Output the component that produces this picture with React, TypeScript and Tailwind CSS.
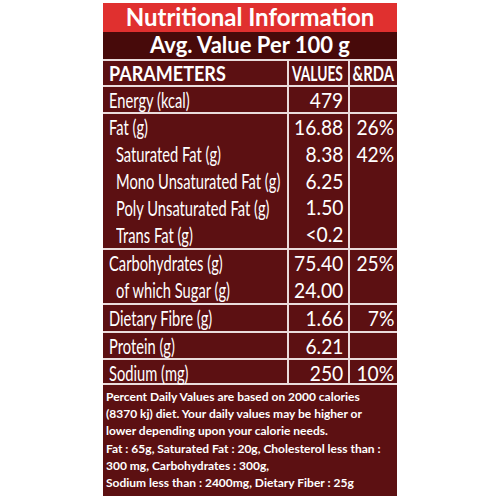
const GROUPS = [
  { h: "h-[27px]", lines: [["Energy (kcal)", false]], values: ["479"], rda: [] as string[] },
  {
    h: "h-[136px]",
    lines: [
      ["Fat (g)", false],
      ["Saturated Fat (g)", true],
      ["Mono Unsaturated Fat (g)", true],
      ["Poly Unsaturated Fat (g)", true],
      ["Trans Fat (g)", true],
    ],
    values: ["16.88", "8.38", "6.25", "1.50", "<0.2"],
    rda: ["26%", "42%"],
  },
  {
    h: "h-[55px]",
    lines: [
      ["Carbohydrates (g)", false],
      ["of which Sugar (g)", true],
    ],
    values: ["75.40", "24.00"],
    rda: ["25%"],
  },
  { h: "h-[28px]", lines: [["Dietary Fibre (g)", false]], values: ["1.66"], rda: ["7%"] },
  { h: "h-[27px]", lines: [["Protein (g)", false]], values: ["6.21"], rda: [] },
  { h: "h-[25px]", lines: [["Sodium (mg)", false]], values: ["250"], rda: ["10%"] },
] as const;

const FOOTER = [
  "Percent Daily Values are based on 2000 calories",
  "(8370 kj) diet. Your daily values may be higher or",
  "lower depending upon your calorie needs.",
  "Fat : 65g, Saturated Fat : 20g, Cholesterol less than :",
  "300 mg, Carbohydrates : 300g,",
  "Sodium less than : 2400mg, Dietary Fiber : 25g",
];

const Sq = ({ children, className }: any) => (
  <span className={`inline-block shrink-0 whitespace-nowrap ${className}`}>{children}</span>
);

const Row = ({ group }: any) => {
  return (
    <div className={`flex border-b-2 border-[#eadcdc] ${group.h}`}>
      <div className="w-[186px] shrink-0 border-r-2 border-[#eadcdc] text-[21px]">
        {group.lines.map(([label, sub]: any) => (
          <div key={label} className={`h-[27px] leading-[26px] ${sub ? "pl-[13px]" : "pl-[6px]"}`}>
            <Sq className="origin-left scale-x-[0.7]">{label}</Sq>
          </div>
        ))}
      </div>
      <div className="flex w-[61px] shrink-0 flex-col items-end border-r-2 border-[#eadcdc] pr-[5px] text-[22px]">
        {group.values.map((v: string) => (
          <div key={v} className="h-[27px] leading-[26px]">
            <Sq className="origin-right scale-x-[0.875]">{v}</Sq>
          </div>
        ))}
      </div>
      <div className="flex min-w-0 flex-1 flex-col items-end pr-[3px] text-[22px]">
        {group.rda.map((v: string) => (
          <div key={v} className="h-[27px] leading-[26px]">
            <Sq className="origin-right scale-x-[0.875]">{v}</Sq>
          </div>
        ))}
      </div>
    </div>
  );
};

const App = () => {
  return (
    <div className="w-[500px] h-[500px] bg-white pt-[3px] font-[Lato,sans-serif] text-white">
      <div className="mx-auto flex h-[493px] w-[294px] flex-col bg-[#5c1012]">
        <div className="h-[29px] bg-[#e0302f] text-center text-[24px] font-bold leading-[27px]">
          Nutritional Information
        </div>
        <div className="h-[29px] border-b-2 border-[#eadcdc] bg-[#470a0a] text-center text-[22px] font-bold leading-[26px]">
          Avg. Value Per 100 g
        </div>
        <div className="flex h-[26px] border-b-2 border-[#eadcdc] text-[20px] font-bold leading-[24px]">
          <div className="w-[186px] shrink-0 border-r-2 border-[#eadcdc] pl-[6px]">
            <Sq className="origin-left scale-x-[0.9]">PARAMETERS</Sq>
          </div>
          <div className="flex w-[61px] shrink-0 justify-end border-r-2 border-[#eadcdc] pr-[5px]">
            <Sq className="origin-right scale-x-[0.69]">VALUES</Sq>
          </div>
          <div className="flex min-w-0 flex-1 justify-end pr-[3px]">
            <Sq className="origin-right scale-x-[0.74]">&amp;RDA</Sq>
          </div>
        </div>
        {GROUPS.map((g, i) => (
          <Row key={i} group={g} />
        ))}
        <div className="flex-1 px-[3px] pt-[3px] text-[12px] font-bold leading-[17.2px]">
          {FOOTER.map((line) => (
            <div key={line} className="whitespace-nowrap">
              {line}
            </div>
          ))}
        </div>
      </div>
    </div>
  );
};

export default App;
